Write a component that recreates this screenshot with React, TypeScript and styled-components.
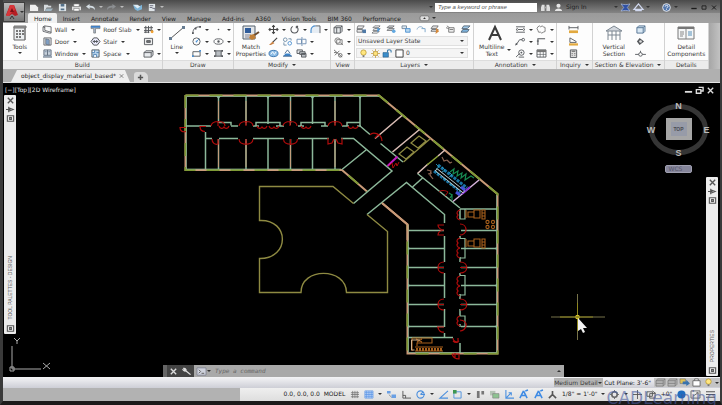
import React from "react";
import styled, { createGlobalStyle } from "styled-components";

const GlobalStyle = createGlobalStyle`
  *, *::before, *::after { box-sizing: border-box; }
  html, body, #root { margin: 0; height: 100%; }
  body { background: #000; overflow: hidden; }
  body, button, input, select {
    font-family: "DejaVu Sans", "Noto Sans", sans-serif;
    font-size: 6px;
    line-height: 8px;
    color: #3c3c3c;
  }
  button, input, select { border: 0; padding: 0; margin: 0; background: none; border-radius: 0; }
`;

/* ---------- shared pieces ---------- */

const INK = "#55585c";
const BLUE = "#4b8fd0";

const glyphs: Record<string, React.ReactNode> = {
  new: <path d="M1 2h6l3 3v4H1z" fill="#eee" />,
  open: <g fill="#d5dadd"><path d="M1 2h4l1 1h3v2H4L2 9H1z" /><path d="M4 6h7L9 9H2z" fill="#9fb4c0" /></g>,
  save: <g><path d="M2 1h8v8H2z" fill="#dfe6ea" /><path d="M4 1h4v3H4zM4 6h4v2H4z" fill="#54718a" /></g>,
  print: <g><path d="M1 4h10v4H1z" fill="#ddd" /><path d="M3 1h6v3H3zM3 6h6v3H3z" fill="#fff" stroke="#777" strokeWidth=".7" /></g>,
  undo: <path d="M1 4l4-3v2c4 0 6 1 6 5-1-2-3-3-6-3v2z" fill="#d4dde3" />,
  redo: <path d="M11 4L7 1v2C3 3 1 4 1 8c1-2 3-3 6-3v2z" fill="#8c8f92" />,
  project: <g><path d="M1 2l5 3 5-3v5L6 9 3 7z" fill="#7fb6da" /><path d="M1 2h5l3 2-3 2z" fill="#e0edf5" /></g>,
  sheet: <g><path d="M3 1h7v8H3z" fill="#dfe5e9" /><path d="M4 3h4M4 5h3M7 6h3v3" stroke="#667" fill="none" /></g>,
  binoc: <g fill="#ddd"><path d="M2 2h3v7H1V5zM7 2h3l1 3v4H7z" /><path d="M5 4h2v2H5z" fill="#aaa" /></g>,
  user: <g fill="#e6e6e6"><circle cx="6" cy="3" r="2.3" /><path d="M2 9c0-4 8-4 8 0z" /></g>,
  exchange: <path d="M1 1c3 1 7 1 10 0L8 5l3 4c-3-1-7-1-10 0l3-4z" fill="#2f51a5" stroke="#c6d2ef" strokeWidth=".6" />,
  cloud: <path d="M6 1L1 7h10zM3 7v1.500h6V7" fill="none" stroke="#d0d8ef" strokeWidth="1.400" />,
  help: <g><circle cx="6" cy="5" r="4.300" fill="#5478ae" stroke="#eee" /><path d="M4.600 4c0-2 3-2 3 0 0 1-1.500 1-1.500 2M6 7v.8" stroke="#fff" fill="none" /></g>,
  min: <path d="M2 6.500h8" stroke="currentColor" strokeWidth="2" />,
  max: <path d="M3 2.500h6v5H3z" fill="none" stroke="currentColor" strokeWidth="1.300" />,
  restore: <path d="M5 1.500h5v4H8M2.500 4h5v4h-5z" fill="none" stroke="currentColor" strokeWidth="1.500" />,
  close: <path d="M3 2l6 6M9 2L3 8" stroke="currentColor" strokeWidth="1.500" />,
  plus: <path d="M6 2v7M2.500 5.500h7" stroke="#555" strokeWidth="2" />,
  tabmenu: <g><rect x="1" y="2" width="10" height="5.500" rx="2" fill="#ddd" stroke="#666" strokeWidth=".8" /><path d="M4.500 5.500h3L6 3.500z" fill="#333" /></g>,

  wall: <path d="M1 2l2-1 7 1v7H8L1 7zM3 1v5l7 2M1 2l2 1" fill="#f4f6f8" stroke={INK} strokeWidth=".9" />,
  door: <g><path d="M2 1h8v8H2z" fill="#e4e8ec" stroke={INK} strokeWidth=".9" /><path d="M4 2l4 1v6L4 8z" fill="#7f9fc4" stroke={INK} strokeWidth=".6" /></g>,
  window: <g><path d="M2 1h8v6H2zM6 1v6M1 9h10" fill="#c8d2dd" stroke="#5e6b7c" /><path d="M3 3h2M7 3h2M1 8h10" stroke="#7c8ea5" /></g>,
  roof: <g><path d="M1 1h10v3H6v5H4V4H1z" fill="#aebccb" stroke={INK} strokeWidth=".6" /><path d="M1 1h10v2H1z" fill="#3f7fc5" /></g>,
  stair: <path d="M1 5l3-4h4l3 4-3 4H4zM3 5h6M4 3.500l4 3M4 6.500l4-3" fill="#eef" stroke={INK} strokeWidth="1.100" />,
  space: <g><path d="M2 1h8v8H2z" fill="#bcd9f2" stroke={INK} /><path d="M2 4h3V1M7 4h3M4 9V6h3v3" fill="#fff" stroke="#4d80b0" /></g>,
  column: <g><path d="M3 1v8M6 1v8M9 1v6M1 3h10M1 6h10M1 8h6" stroke={INK} strokeWidth="1.100" /><circle cx="10" cy="7.500" r="1.600" fill="#f0a030" /></g>,
  curtain: <g><path d="M1.500 1.500h9v7h-9z" fill="#eee" stroke={INK} /><path d="M4 4h4v2H4z" fill="#777" stroke={INK} /></g>,
  box: <path d="M1 4l2-2h8v5L9 9H1zM1 4h8v5M9 4l2-2" fill="#e8ebee" stroke={INK} />,

  arc: <g><path d="M2 9C2 4 5 2 10 2" fill="none" stroke={INK} /><path d="M1 8h2v2H1zM4 3h2v2H4zM9 1h2v2H9z" fill={INK} /></g>,
  circle: <g><circle cx="6" cy="5" r="4" fill="none" stroke={INK} /><path d="M6 5l3-3" stroke={BLUE} /><circle cx="6" cy="5" r="1" fill={BLUE} /></g>,
  rect: <g><path d="M2 3h8v5H2z" fill="none" stroke={INK} /><path d="M9 1h2v2H9zM1 7h2v2H1z" fill={BLUE} /></g>,
  point: <circle cx="6" cy="5" r=".9" fill={INK} />,
  ellipse: <g><ellipse cx="6" cy="5" rx="5" ry="3" fill="none" stroke={INK} /><circle cx="6" cy="5" r="1.300" fill={INK} /></g>,
  hatch: <g><path d="M3 2h6v6H3z" fill="#b9bec3" stroke={INK} /><path d="M1 1h2v2H1zM9 1h2v2H9zM1 7h2v2H1zM9 7h2v2H9z" fill={INK} /></g>,

  move: <path d="M6 0v10M1 5h10M4.500 2L6 .5 7.500 2M4.500 8L6 9.500 7.500 8M2.500 3.500L1 5l1.500 1.500M9.500 3.500L11 5 9.500 6.500" fill="none" stroke="#444" strokeWidth="1.200" />,
  rotate: <path d="M4 1.500a4 4 0 1 0 4 0M8 1.500h2M8 1.500v2" fill="none" stroke={INK} strokeWidth="1.200" />,
  fillet: <g><path d="M1 9V6c0-3 2-5 5-5h5v8z" fill="#e6edf4" /><path d="M1 9V6c0-3 2-5 5-5" fill="none" stroke={BLUE} strokeWidth="1.300" /><path d="M6 1h5v8" fill="none" stroke={INK} /></g>,
  erase: <g><path d="M10 1L5 6" stroke="#444" strokeWidth="1.300" /><path d="M5 5l2 2-4 2H1z" fill="#c98345" /></g>,
  copy: <g fill="none" stroke="#6f8ca6"><circle cx="3.500" cy="3" r="2" /><circle cx="8.500" cy="7" r="2" stroke={BLUE} /><path d="M7 2h3v2M2 6v3h3" /></g>,
  trim: <path d="M1 2.500h5v5H1zM7 2.500h4v5H7M6.500 0v10" fill="none" stroke="#6b8bb0" />,
  union: <g><ellipse cx="6" cy="5" rx="5" ry="3.500" fill="#8bbce6" stroke="#3672ad" /><path d="M3 6l2-3 2 3 2-3" fill="none" stroke="#fff" /></g>,
  mirror: <g><path d="M1 8h10L8 5H4z" fill="#3b83c9" /><path d="M3 5l3-4 3 4M1 8h10" fill="none" stroke="#4a6a8c" /></g>,
  array: <g><path d="M1 1h6v4H1z" fill="#dfe2e6" stroke={INK} /><path d="M4 3h6v3H4zM6 5h5v4H6z" fill="#bcc1c6" stroke={INK} /></g>,

  view1: <path d="M1 3l2-2h7v6l-2 2H1zM1 3h7v6M8 3l2-2M4 3v6" fill="#e6e9ec" stroke={INK} />,
  view2: <g fill="none" stroke="#777"><circle cx="5" cy="4" r="3" /><path d="M4 3h6v5H4zM8 6l3 3" /></g>,
  view3: <g fill="none" stroke="#666"><path d="M1 1l9 8M2 7l5-5" /><circle cx="8" cy="7" r="2" /><path d="M1 4h3" /></g>,

  layer1: <g><path d="M2 1h7L7 4H1zM1 5h6v3H1z" fill="#e8e8e8" stroke={INK} strokeWidth=".8" /><path d="M7 5h4v4H7z" fill="#4f79a6" /></g>,
  layer2: <g><path d="M4 1h6L8 3H2zM4 4h6L8 6H2zM3 7h6L7 9H1z" fill="#fff" stroke={INK} strokeWidth=".8" /><path d="M7 3l3 2-3 3z" fill="#4b9be0" /></g>,
  layer3: <g><path d="M3 1h6L7 3H1zM3 4h6L7 6H1z" fill="#ddd" stroke={INK} strokeWidth=".8" /><circle cx="8.500" cy="7" r="2" fill="#62a8e0" /></g>,
  layer4: <g><path d="M1 1h5v3H1z" fill="#d8e8f5" stroke="#789" /><path d="M5 4h5v4H5z" fill="#b9d8ef" stroke="#4b8fd0" /></g>,
  layer5: <g><path d="M1 5c1-4 6-4 7-1" fill="none" stroke="#88aaca" /><path d="M6 4h4v4" fill="none" stroke="#78a4c8" /></g>,
  layer6: <g><path d="M3 1h6L7 4H1zM2 5h7L7 7H1z" fill="#ddd" stroke={INK} strokeWidth=".8" /><path d="M7 3l3 4-4 3z" fill="#d68a3c" /></g>,
  layer7: <path d="M2 1l3 2M4 3h6v5H4zM5 5h4M1 3l3 1" fill="#eee" stroke="#777" />,
  layer8: <g><path d="M4 1h7L8 4H2z" fill="#9fc8e8" stroke="#567" /><path d="M3 5h7L8 8H1z" fill="#7db3dd" stroke="#567" /></g>,
  bulb: <g><circle cx="6" cy="4" r="3" fill="#ffe680" stroke="#b79423" strokeWidth=".8" /><path d="M5 7h2v2H5z" fill="#777" /></g>,
  sun: <g><path d="M6 0v10M1 5h10M2.500 1.500l7 7M9.500 1.500l-7 7" stroke="#c49a3a" strokeWidth=".8" /><circle cx="6" cy="5" r="2.500" fill="#ffe37a" stroke="#a8852d" strokeWidth=".7" /></g>,
  unlock: <g><path d="M1 4h6v5H1z" fill="#3c8ecb" stroke="#28608c" strokeWidth=".7" /><path d="M6 4V2c0-1.500 4-1.500 4 0v2" fill="none" stroke="#3c7cab" strokeWidth="1.200" /></g>,
  swatch: <path d="M2 1h8v8H2z" fill="#fff" stroke="#333" />,

  dim: <path d="M1 2h10M1 8h10M3 5h6M3 3.500L1 5l2 1.500M9 3.500L11 5 9 6.500" fill="none" stroke={INK} />,
  leader: <g><path d="M1 9l4-6h3" fill="none" stroke={INK} /><circle cx="9" cy="3" r="1.500" fill="none" stroke={INK} /><path d="M0 9.500l1-3 2 1.500z" fill={INK} /></g>,
  tag: <g fill="none" stroke={INK}><path d="M1 9l4-4" /><circle cx="7" cy="4" r="3" /><path d="M6 4h2M7 3v2M4 9h6" /></g>,
  revcloud: <path d="M2 2q2-2 3 0 2-2 3 0 3 0 2 3 1 3-2 3-2 2-3 0-3 1-3-2-2-2 0-4z" fill="none" stroke="#777" />,
  elbow: <path d="M2 9V2h8M2 5l-1-1M2 5l1-1" fill="none" stroke={INK} strokeWidth="1.200" />,
  table: <g><path d="M1 1h10v8H1z" fill="#fff" stroke={INK} /><path d="M1 1h10v2.500H1z" fill="#777" /><path d="M1 6h10M4.500 3v6M8 3v6" stroke={INK} strokeWidth=".7" /></g>,
  measure: <g><path d="M1 1v4M11 1v4M1 3h10" stroke={INK} /><path d="M1 6h10v3H1z" fill="#e2a93f" /></g>,
  area: <g><path d="M2 1l7 4v1H2z" fill="#fff" stroke={INK} /><path d="M1 7h10v2.500H1z" fill="#e2a93f" /></g>,
  calc: <g><path d="M2.500 1h7v8.500h-7z" fill="#ddd" stroke={INK} /><path d="M4 2.500h4M4 5h1M7 5h1M4 7h1M7 7h1" stroke="#555" /></g>,
  cube: <path d="M2 3l2-2h7v6L9 9H2zM2 3h7v6M9 3l2-2" fill="#d9e8f4" stroke="#4f6f8e" />,
  mark: <g><path d="M2 5l3-4 5 4-5 4z" fill={INK} /><circle cx="6" cy="5" r="1.500" fill="#ddd" /></g>,
  level: <g fill="none" stroke={INK}><path d="M0 6h12" /><circle cx="6" cy="6" r="2" fill="#fff" /><path d="M6 4V2" /></g>,

  grid: <path d="M4 1v8M6.500 1v8M9 1v8M2 3h9M2 5h9M2 7.500h9" stroke="#6c6c6c" strokeWidth=".8" />,
  dots: <path d="M2 1h9v8H2zM2 3h9M2 5h9M2 7h9M4 1v8M6.500 1v8M9 1v8" fill="#c9defa" stroke="#5a94e4" strokeWidth=".8" />,
  infer: <g><path d="M1 1h4v3H1zM6 5h5v4H6z" fill="#6aa0e4" /><path d="M3 5l3 3" stroke="#888" /></g>,
  ortho: <path d="M2 1v8h9M2 6h3v3" fill="none" stroke="#555" />,
  polar: <g fill="none" stroke="#4a8edd" strokeWidth="1.200"><circle cx="6" cy="5" r="4" /><path d="M6 5h5M6 5l3-3" /></g>,
  angle: <path d="M11 1L2 9h9" fill="none" stroke="#4a8edd" strokeWidth="1.200" />,
  snap: <g><path d="M2 2h8v7H2z" fill="none" stroke="#4a8edd" /><path d="M1 0h4v4H1z" fill="#3e9750" /></g>,
  lwt: <g fill="#777"><path d="M2 1h3v8H2zM7 1h3v4H7z" /></g>,
  cycle: <g><path d="M1 1h6v5H1z" fill="#b6c4b6" /><path d="M4 4h7v5H4z" fill="#8ec391" stroke="#777" strokeWidth=".6" /></g>,
  ucs: <path d="M2 0v9h9M2 9l6-6M5 3h3v3" fill="none" stroke="#4a90e0" strokeWidth="1.200" />,
  annoA: <path d="M6 1L2 9M6 1l4 8M4 6h5M8 1l3-1" fill="none" stroke="#3d8ae4" strokeWidth="1.700" />,
  annoB: <path d="M6 1v4L2 9M6 5l4 4M6 3v3" fill="none" stroke="#555" strokeWidth="1.800" />,
  gear: <g><circle cx="6" cy="5" r="3" fill="none" stroke="#666" strokeWidth="1.800" /><path d="M6 0v2M6 8v2M1 5h2M9 5h2" stroke="#666" /></g>,
  cross: <path d="M6 0v10M1 5h10" stroke="#555" />,
  isolate: <path d="M1 2h6v5H1zM4 4h6v5H4zM7 1l4 3" fill="none" stroke="#555" />,
  perf: <circle cx="6" cy="5" r="4.500" fill="#1f6dc0" />,
  full: <path d="M1 1h10v8H1zM3 7l6-4M7 3h2v2" fill="none" stroke="#666" />,
  menu: <path d="M1 2h10M1 5h10M1 8h10" stroke="#555" strokeWidth="1.200" />,
  surf: <path d="M1 3l2-2h8v6L9 9H1zM1 3h8v6M9 3l2-2M1 6h8" fill="#b6b6b6" stroke="#777" strokeWidth=".8" />,
  swap: <g><path d="M1 1h6v5H1z" fill="#e1c255" stroke="#666" strokeWidth=".6" /><path d="M4 4h4V2l4 4-4 3V7H4z" fill="#3973ad" /></g>,
  clip: <path d="M2 3h8v6H2zM4 3V1h4v2" fill="#fff" stroke="#666" />,
  pin: <path d="M1 5h5M4 2v6M4 3l5 2-5 2" fill="none" stroke="currentColor" strokeWidth="1.200" />,
  props: <path d="M2.500 2h7v6h-7zM5 4h2v2H5z" fill="none" stroke="currentColor" strokeWidth="1.200" />,
  wrench: <path d="M2 1c3-1 5 2 4 3l5 4-1 1-5-4C3 6 1 3 1 2l2 1z" fill="#ddd" />,
  prompt: <g><path d="M1 1h10v8H1z" fill="#cfd2dc" stroke="#77798a" strokeWidth=".8" /><path d="M3 3l2 2-2 2M6 7h3" fill="none" stroke="#555" /></g>,
};

const Svg = styled.svg<{ $w?: number; $h?: number }>`
  display: block;
  flex: none;
  width: ${(p) => p.$w ?? 11}px;
  height: ${(p) => p.$h ?? 9}px;
  overflow: visible;
`;

const Glyph = ({ name, w, h }: { name: string; w?: number; h?: number }) => (
  <Svg viewBox="0 0 12 10" $w={w} $h={h} aria-hidden="true">{glyphs[name]}</Svg>
);

const Caret = styled.span<{ $light?: boolean; $up?: boolean }>`
  flex: none;
  width: 0;
  height: 0;
  border: 2px solid transparent;
  border-${(p) => (p.$up ? "bottom" : "top")}: 2px solid ${(p) => (p.$light ? "#bbb" : "#333")};
  border-${(p) => (p.$up ? "top" : "bottom")}: 0;
`;

const IconButton = styled.button`
  display: flex;
  align-items: center;
  gap: 2px;
  white-space: nowrap;
  flex: none;
  color: inherit;
`;

const Tool = ({ name, label }: { name: string; label?: string }) => (
  <IconButton type="button" aria-label={label ?? name}><Glyph name={name} /></IconButton>
);

/* ---------- window frame ---------- */

const Frame = styled.main`
  display: flex;
  flex-direction: column;
  height: 100vh;
  border: solid #3a3a3a;
  border-width: 0 2px 4px 3px;
  border-bottom-color: #1c1a1a;
  background: #b0b0b0;
`;

const Header = styled.header`
  display: grid;
  grid-template-columns: 23px minmax(0, 1fr);
  grid-template-rows: 13px 10px;
  background: linear-gradient(#4a4a4a, #858585 13px, #9a9a9a 13px, #a2a2a2);
`;

const AppButton = styled.button`
  grid-row: 1 / 3;
  display: flex;
  align-items: center;
  justify-content: center;
  gap: 1px;
  margin: 2px 1px 1px 0;
  background: linear-gradient(#b9b9b9, #777);
  border: 1px solid #3f3f3f;
`;

const TitleBar = styled.div`
  display: flex;
  align-items: center;
  padding: 1px 2px 0 3px;
  min-width: 0;
`;

const QuickTools = styled.div`
  display: flex;
  align-items: center;
  gap: 3px;
  flex: 1;
`;

const QuickGroup = styled.div`
  display: flex;
  align-items: center;
  gap: 3px;
  margin-left: 5px;
`;

const Search = styled.input`
  flex: 0 1 102px;
  min-width: 0;
  height: 9px;
  margin: 0 3px 0 2px;
  padding: 0 3px;
  background: #fff;
  font: italic 6px/9px "Liberation Sans", Arial, sans-serif;
  &::placeholder { color: #555; opacity: 1; }
`;

const Account = styled.div`
  display: flex;
  align-items: center;
  gap: 2px;
  flex: 0 0 178px;
  color: #1c1c1c;
`;

const Spacer = styled.span<{ $grow?: number }>`
  flex: ${(p) => p.$grow ?? 1} 1 0;
`;

const Tabs = styled.nav`
  display: flex;
  align-items: stretch;
  padding-left: 2px;
`;

const Tab = styled.button<{ $on?: boolean }>`
  padding: 0 5px 0 6px;
  height: 10px;
  line-height: 9px;
  color: #202020;
  ${(p) => p.$on && "background: #f1f1f1; border-radius: 2px 2px 0 0;"}
`;

const TabExtras = styled.div`
  display: flex;
  align-items: center;
  gap: 2px;
  padding-left: 13px;
`;

/* ---------- ribbon ---------- */

const Ribbon = styled.section`
  display: flex;
  height: 46px;
  padding-right: 11px;
  background: linear-gradient(90deg, #eee calc(100% - 11px), #a6a6a6 calc(100% - 11px), #c2c2c2);
`;

const PanelBox = styled.section<{ $w: number }>`
  flex: ${(p) => p.$w} 1 0;
  min-width: 0;
  display: flex;
  flex-direction: column;
  border-right: 1px solid #d2d2d2;
  background: #fdfdfd;
`;

const PanelBody = styled.div<{ $cols: number[] }>`
  flex: 1;
  display: grid;
  grid-template-columns: ${(p) => p.$cols.map((c) => `minmax(0, ${c}fr)`).join(" ")};
`;

const PanelTitle = styled.h2`
  display: flex;
  align-items: center;
  justify-content: center;
  gap: 4px;
  margin: 0;
  height: 9px;
  font-size: 6px;
  font-weight: 400;
  line-height: 8px;
  white-space: nowrap;
  background: #ececec;
  border-top: 1px solid #ddd;
`;

const Column = styled.div<{ $pad?: number; $rule?: boolean }>`
  display: grid;
  grid-template-rows: repeat(3, 11px);
  row-gap: 1px;
  padding: 1px 0 0 ${(p) => p.$pad ?? 0}px;
  ${(p) => p.$rule && "border-left: 1px solid #ccc;"}
`;

const Row = styled.div<{ $gap?: number; $spread?: boolean }>`
  display: flex;
  align-items: center;
  gap: ${(p) => p.$gap ?? 3}px;
  ${(p) => p.$spread && "justify-content: space-between; padding-right: 2px;"}
`;

const BigButton = styled.button`
  display: flex;
  flex-direction: column;
  align-items: center;
  justify-content: flex-start;
  padding-top: 2px;
  gap: 2px;
  line-height: 7px;
  white-space: nowrap;
`;

const BigLabel = styled.span`
  display: flex;
  align-items: center;
  gap: 2px;
`;

const DropRow = styled.div`
  display: flex;
  align-items: center;
  gap: 1px;
  height: 10px;
  margin-right: 5px;
  padding: 0 3px 0 1px;
  background: #f4f4f4;
  border: 1px solid #e0e0e0;
`;

const DropSelect = styled.select`
  flex: 1;
  min-width: 0;
  appearance: none;
  height: 8px;
  outline: none;
`;

const Panel = ({ title, w, cols, more, children }: { title: string; w: number; cols: number[]; more?: boolean; children: React.ReactNode }) => (
  <PanelBox $w={w}>
    <PanelBody $cols={cols}>{children}</PanelBody>
    <PanelTitle>{title}{more && <Caret />}</PanelTitle>
  </PanelBox>
);

const Labelled = ({ name, text }: { name: string; text: string }) => (
  <Row $gap={4}><IconButton type="button"><Glyph name={name} />{text}</IconButton><Caret /></Row>
);

const IconColumn = ({ names, pad, caret = true }: { names: string[]; pad?: number; caret?: boolean }) => (
  <Column $pad={pad}>
    {names.map((n) => <Row key={n}><Tool name={n} />{caret && <Caret />}</Row>)}
  </Column>
);

const RibbonPanels = () => (
  <Ribbon>
    <Panel title="Build" w={161} cols={[34, 54, 52, 20]}>
      <BigButton type="button">
        <Svg viewBox="0 0 14 16" $w={14} $h={16}>
          <path d="M1 2h11v13H1z" fill="#eceff1" stroke="#666" />
          <path d="M3 5h2v2H3zM6 5h2v2H6zM9 5h2v2H9zM3 8h2v2H3zM6 8h2v2H6zM9 8h2v2H9zM3 11h2v2H3zM6 11h2v2H6z" fill="#777" />
          <path d="M1 1h12v2H1zM12 3v12" stroke="#777" fill="#999" />
        </Svg>
        Tools<Caret />
      </BigButton>
      <Column $pad={4} $rule>
        <Labelled name="wall" text="Wall" /><Labelled name="door" text="Door" /><Labelled name="window" text="Window" />
      </Column>
      <Column>
        <Labelled name="roof" text="Roof Slab" /><Labelled name="stair" text="Stair" /><Labelled name="space" text="Space" />
      </Column>
      <Column $pad={1}>
        <Row><Tool name="column" /><Caret /></Row><Row><Tool name="curtain" /></Row><Row><Tool name="box" /><Caret /></Row>
      </Column>
    </Panel>
    <Panel title="Draw" w={71} cols={[28, 22, 20]}>
      <BigButton type="button">
        <Svg viewBox="0 0 18 16" $w={18} $h={16}>
          <path d="M2 14L16 2" stroke="#555" />
          <path d="M1 12h3v3H1zM14 1h3v3h-3z" fill="#667c92" />
        </Svg>
        Line<Caret />
      </BigButton>
      <IconColumn names={["arc", "circle", "rect"]} />
      <IconColumn names={["point", "ellipse", "hatch"]} />
    </Panel>
    <Panel title="Modify" w={98} cols={[35, 63]} more>
      <BigButton type="button">
        <Svg viewBox="0 0 18 16" $w={18} $h={16}>
          <path d="M1 1h12v13H1z" fill="#e2e6ea" stroke="#55606c" />
          <path d="M3 3h6v5H3z" fill="#2f5c9b" /><path d="M3 10h6M3 12h4" stroke="#889" />
          <path d="M17 7l-6 4" stroke="#6a4a2d" strokeWidth="2" /><path d="M8 10l4-1 2 4-4 2-3-2z" fill="#c08038" />
        </Svg>
        <span>Match<br />Properties</span>
      </BigButton>
      <Column>
        <Row><Tool name="move" /><Caret /><Tool name="rotate" /><Caret /><Tool name="fillet" /><Caret /></Row>
        <Row><Tool name="erase" /><Tool name="copy" /><Tool name="trim" /><Caret /></Row>
        <Row><Tool name="union" /><Tool name="mirror" /><Tool name="array" /><Caret /></Row>
      </Column>
    </Panel>
    <Panel title="View" w={23} cols={[1]}>
      <IconColumn names={["view1", "view2", "view3"]} pad={2} />
    </Panel>
    <Panel title="Layers" w={120} cols={[1]} more>
      <Column $pad={1}>
        <Row $spread>{[1, 2, 3, 4, 5, 6, 7, 8].map((n) => <Tool key={n} name={`layer${n}`} />)}</Row>
        <DropRow>
          <DropSelect aria-label="Layer state"><option>Unsaved Layer State</option></DropSelect><Caret />
        </DropRow>
        <DropRow>
          <Glyph name="bulb" /><Glyph name="sun" /><Glyph name="unlock" /><Glyph name="swatch" />
          <DropSelect aria-label="Current layer"><option>0</option></DropSelect><Caret />
        </DropRow>
      </Column>
    </Panel>
    <Panel title="Annotation" w={83} cols={[41, 21, 20]} more>
      <BigButton type="button">
        <Svg viewBox="0 0 16 16" $w={16} $h={16}>
          <path d="M2 15L8 2l6 13M4 10h8" fill="none" stroke="#3c3c3c" strokeWidth="2" />
        </Svg>
        <BigLabel><span>Multiline<br />Text</span><Caret /></BigLabel>
      </BigButton>
      <IconColumn names={["dim", "leader", "tag"]} />
      <IconColumn names={["revcloud", "elbow", "table"]} />
    </Panel>
    <Panel title="Inquiry" w={35} cols={[1]} more>
      <IconColumn names={["measure", "area", "calc"]} pad={11} caret={false} />
    </Panel>
    <Panel title="Section & Elevation" w={72} cols={[43, 29]} more>
      <BigButton type="button">
        <Svg viewBox="0 0 18 16" $w={18} $h={16}>
          <path d="M1 6l8-5 8 5zM3 6v9M15 6v9M3 10h12M7 6v9M11 6v9" fill="#d3d8de" stroke="#7c8792" />
        </Svg>
        <span>Vertical<br />Section</span>
      </BigButton>
      <IconColumn names={["cube", "mark", "level"]} caret={false} />
    </Panel>
    <Panel title="Details" w={44} cols={[1]}>
      <BigButton type="button">
        <Svg viewBox="0 0 18 16" $w={18} $h={16}>
          <path d="M1 2h16v12H1z" fill="#f5f7f8" stroke="#777" /><path d="M1 2h16v2H1z" fill="#777" />
          <path d="M9 4v10M3 7h4M3 9h4M3 11h3" stroke="#888" /><path d="M11 6h4v5h-4z" fill="#a5c3d8" />
        </Svg>
        <span>Detail<br />Components</span>
      </BigButton>
    </Panel>
  </Ribbon>
);

/* ---------- document tabs ---------- */

const DocBar = styled.nav`
  display: flex;
  align-items: flex-end;
  gap: 4px;
  height: 14px;
  padding-left: 8px;
  border-bottom: 1px solid #e4e4e4;
  background: #b0b0b0;
`;

const DocTab = styled.div`
  display: flex;
  align-items: center;
  gap: 2px;
  height: 12px;
  padding: 0 5px 0 10px;
  background: #eee;
  color: #777;
  clip-path: polygon(0 100%, 6px 0, calc(100% - 5px) 0, 100% 100%);
`;

const DocName = styled.button`
  color: #1c1c1c;
`;

const AddTab = styled.button`
  display: flex;
  align-items: center;
  justify-content: center;
  width: 14px;
  height: 10px;
  background: #dadada;
  border-radius: 3px 5px 0 0;
`;

/* ---------- drawing area ---------- */

const Canvas = styled.section`
  position: relative;
  flex: 1;
  min-height: 0;
  background: #000;
  color: #ddd;
`;

const Plan = styled.svg`
  display: block;
  width: 100%;
  height: 100%;
`;

const ViewLabel = styled.p`
  position: absolute;
  top: 3px;
  left: 2px;
  margin: 0;
  color: #e4e4e4;
`;

const ViewControls = styled.div`
  position: absolute;
  top: 3px;
  right: 4px;
  display: flex;
  color: #ddd;
`;

const Palette = styled.aside<{ $side: "left" | "right" }>`
  position: absolute;
  ${(p) => (p.$side === "left" ? "left: 1px; top: 12px; bottom: 43px;" : "right: 2px; top: 94px; bottom: 1px;")}
  width: 12px;
  display: flex;
  flex-direction: column;
  align-items: center;
  padding: 1px 0;
  background: #ececec;
  color: #555;
  border-radius: 1px;
`;

const PaletteName = styled.span`
  margin: auto 0 4px;
  writing-mode: vertical-rl;
  transform: rotate(180deg);
  font: 5px/8px "Liberation Sans", Arial, sans-serif;
  white-space: nowrap;
`;

const Cube = styled.div`
  position: absolute;
  right: 9px;
  top: 16px;
  width: 66px;
  display: flex;
  flex-direction: column;
  align-items: center;
  gap: 6px;
`;

const Wcs = styled.button`
  width: 27px;
  height: 8px;
  padding-left: 3px;
  text-align: left;
  background: #85859a;
  border: 1px solid #a0a0b0;
  border-radius: 2px;
  line-height: 6px;
  color: #55556a;
`;

const CommandBar = styled.form`
  position: absolute;
  left: 160px;
  right: 156px;
  bottom: 0;
  height: 12px;
  display: flex;
  align-items: center;
  background: #a9a9a9;
  padding-right: 3px;
`;

const CommandGrip = styled.div`
  display: flex;
  align-items: center;
  justify-content: flex-end;
  gap: 2px;
  width: 31px;
  height: 100%;
  margin-right: 2px;
  padding-right: 2px;
  color: #ddd;
  background: #444;
  border-left: 4px solid #666;
`;

const CommandInput = styled.input`
  flex: 1;
  min-width: 0;
  margin-left: 4px;
  outline: none;
  font: italic 6px/8px "DejaVu Sans Mono", monospace;
  &::placeholder { color: #666; opacity: 1; }
`;

const GREEN = "#8cb89a";
const SALMON = "#c99a78";
const LIME = "#7f9a36";
const RED = "#b00c0c";
const OLIVE = "#8e8a42";
const PINK = "#d9bcb4";
const ORANGE = "#a8601c";

const topDoors = [218, 246, 290, 335];
const rightRows = [230, 248, 267, 285, 304, 326];

const FloorPlan = () => (
  <Plan viewBox="3 83 717 294" fill="none" role="img" aria-label="Floor plan">
    {/* outer shell with alternating material bands */}
    <g strokeWidth="2">
      <path d="M185.500 95.500H379L497.500 194V353.500H407.500V224.500L382 203M185.500 95v75H342L367 191.500" stroke={SALMON} />
      <path d="M185.500 95.500H379L497.500 194V353.500H407.500V224.500M185.500 95v75H342L367 191.500" stroke={LIME} strokeDasharray="13 11" />
    </g>
    <path d="M186.500 96.500H379M408.500 225V352.500H496.500V195M186.500 97v72H341" stroke={GREEN} strokeWidth=".7" />

    {/* west wing partitions */}
    <g stroke={GREEN} strokeWidth="1.500">
      <path d="M218.500 96v27M246 96v27M268 96v28M290.500 96v27M312.500 96v28M335 96v27M360 96v30L370 134.500" />
      <path d="M205.500 132v37M218.500 139v30M246 139v30M268 139v30M290.500 139v30M312.500 139v30M335 139v30" />
      <path d="M186 126h25M231 126h7M253 126h6M276 126h8M298 126h6M321 126h7M342 126h7M357 126h4" />
      <path d="M219 122.500h12v3M256 126v-3.500h24v3.500M301 126v-3.500h24v3.500M347 126v-3.500h13" />
      <path d="M205 138.500h7M219 138.500h19M253 138.500h31M298 138.500h31M341 138.500h12.500L392 171 353.500 203.500M366 150L342 169.500" />
    </g>
    <path d="M218.500 101v18M246 101v24M290.500 101v24M335 101v24M246 141v26M290.500 141v26M335 141v26M218.500 141v26" stroke={SALMON} strokeWidth=".9" />
    <path d="M216 96h5l-2.500 3zM266 96h4l-2 3zM310 96h5l-2.500 3zM358 96h4l-2 3z" fill={GREEN} />

    {/* corner core */}
    <path d="M402 115.500L375 138.500M419.500 129.500L392.500 152" stroke={PINK} strokeWidth="1.600" />
    <path d="M380.500 143.500L403 162M417.500 173.500L460 208M422.500 178L412.500 187" stroke={GREEN} strokeWidth="1.500" />
    <path d="M430.500 138.500L403.500 162M399 154l8-7 7 5-8 7zM411 143l8-7 7 5-8 7z" stroke={OLIVE} strokeWidth="1.300" />
    <path d="M445 150l-7 6M428 164l-10.500 9.500" stroke={PINK} strokeWidth="1.600" />
    <path d="M438 156l-11 9" stroke="#8fa53a" strokeWidth="1.600" />
    <path d="M397.500 156.500L387.500 166" stroke="#c21ac2" strokeWidth="2" />
    <path d="M389 166l3-3 1 5 3-5 1 3 2-4M439 192c2-2 6-2 9 0l-3 4" stroke={RED} />
    <path d="M479 180L453 201.500" stroke="#d7b4dc" strokeWidth="1.500" />
    <path d="M470 187l-8 7" stroke="#8534d0" strokeWidth="2" />
    <g stroke="#1874a4" strokeWidth="3" strokeDasharray="3 1">
      <path d="M438 165l29 23M434 171l27 21" />
    </g>
    <g stroke="#2aa3c8" strokeWidth=".8">
      <path d="M436 164l3 3-3 2M442 167l3 3-3 2M449 172l3 3-3 2M436 172l3 2M443 178l3 2M450 184l3 2" />
    </g>
    <path d="M436 169.500l28 22.500" stroke="#d5e6e8" strokeWidth="3.400" />
    <path d="M436.500 170l27 21.500" stroke="#000" strokeWidth="1.800" />
    <path d="M450 172l4-3-1 5 5-3-1 5 5-3-1 5 5-4-1 6 6-4 3 2M449 193l3 2-2 3M452 194v6" stroke="#178a52" strokeWidth="1.200" />
    <path d="M427 170l4 1-1 4 3 4M442 157l2 4 3-1M447 160l3 3 2-1M428 174l4-1" stroke="#8a6350" strokeWidth="1.200" />
    <path d="M456 192l4 3M461 187l4 3" stroke="#4555d8" strokeWidth="3" />

    {/* south wing */}
    <g stroke={GREEN} strokeWidth="1.500">
      <path d="M367 214.500L406.500 182.500 444.500 214.500V223M444.500 236v26M444.500 273v25M444.500 309v18M444.500 333v4" />
      <path d="M460 209h37M460 209v10M460 236v3M460 257v5M460 273v3M460 294v5M460 309v7M460 324v3M460 343v10" />
      {rightRows.map((y) => <path key={y} d={`M408 ${y}.500H444M461 ${y}.500H497`} />)}
      <path d="M408 337.500h45" />
      <path d="M465 209v10h-5M460 238.500h5V258h-5M460 275.500h5V295h-5M460 316h5v10" strokeWidth="1.200" />
    </g>
    <path d="M382 203l25.500 21.500V240" stroke={SALMON} strokeWidth="2" />
    {[248, 285, 326].map((y) => <path key={y} d={`M408 ${y - 1}l3 1.500-3 1.500zM497 ${y - 1}l-3 1.500 3 1.500z`} fill={GREEN} />)}

    {/* doors */}
    <g stroke={RED} strokeWidth="1.200">
      {topDoors.map((x) => <path key={x} d={`M${x - 7} 126c1-6 14-6 14 0M${x} 121v5`} />)}
      <path d="M239 139c0 7 14 7 14 0M246 139v6M283.500 139c0 7 14 7 14 0M290.500 139v6M328 138v6l4-1 2-4M342 138v6l-4-1-2-4M212 139c0 4 3 6 6 5v-5" />
      {[224, 262, 274, 306, 353].map((x) => <path key={x} d={`M${x - 5} 126c1 3 4 3 5 1 1 2 4 2 5-1`} />)}
      <path d="M186 127.500h-6c0 3 2 5 6 4M206 126.500h-6c0 3 2 5 5 5" />
      <path d="M370 135c3-4 12-1 12 6M375 138l3-3" />
      <path d="M444 225h-6c0 3 3 5 6 5-3 0-6 2-6 5h6M460 224c4 0 6 3 6 6s-3 5-6 5" />
      {[267, 304].map((y) => <path key={y} d={`M444 ${y - 5}c-8 0-8 11 0 11M438 ${y}.500h6M460 ${y - 5}c9 0 9 11 0 11M460 ${y}.500h6`} />)}
      <path d="M437 327h7M438 327c0 3 3 6 6 5M460 320c4 0 7 3 6 6s-3 5-6 5M453 338c0 3 3 5 6 3M453 341c1 1 3 2 5 1v-4" />
      {[215, 243, 253, 281, 291, 321].map((y) => <path key={y} d={`M460 ${y - 5}c-3 1-4 3-2 5-2 2-1 4 2 5`} />)}
      <path d="M452 354h7v5c-4 0-6-2-7-5M455 353v5" />
    </g>

    {/* furniture and stairs */}
    <g stroke={ORANGE} strokeWidth="1.100">
      {[210, 239].map((y) => <path key={y} d={`M466 ${y}v8M468 ${y + 2}h6v5h-6zM474 ${y}h6v8h-6zM482 ${y}h3v9h-3zM482 ${y + 3}h3M482 ${y + 6}h3`} />)}
      <circle cx="487.500" cy="222" r="1.600" /><circle cx="493" cy="222" r="1.600" />
      <circle cx="487.500" cy="227" r="1.600" /><circle cx="493" cy="227" r="1.600" />
      <path d="M415 347h28M415 351h28M412 338h20v5h-15v3M412 338v13M416 339l6 3M422 339l-5 3" />
      <path d="M417 348v3M420 348v3M423 348v3M426 348v3M429 348v3M432 348v3M435 348v3M438 348v3M441 348v3" strokeWidth="2" />
    </g>
    <path d="M420 340h-8.500v10h3" stroke="#d2b18d" />

    {/* courtyard outline */}
    <path d="M353.500 203.500L333 186.500H259.500V220.500C290 219 290 259 259.500 258.500V292.500H301C301 267 346 267 346.500 292.500H387.500V231.500L367 214.500" stroke={OLIVE} strokeWidth="1.400" />

    {/* coordinate axes */}
    <path d="M12 346v23h29M10 367h4v4h-4zM14 338l3 3 3-3M17 341v3M43 363l7 6M50 363l-7 6" stroke="#aaa" />

    {/* crosshair and pointer */}
    <path d="M551 317h54M577.500 294v46" stroke="#77734a" />
    <path d="M560 317h33M577.500 303v28" stroke="#8f871e" />
    <path d="M576 315.500h3v3h-3z" stroke="#d0bd28" />
    <path d="M578 318v13l3-2 2 4 2-1-2-4h4z" fill="#f2f2f2" />
  </Plan>
);

const ViewCube = () => (
  <Cube>
    <Svg viewBox="644 98 66 60" $w={66} $h={60} fill="none">
      <ellipse cx="677.500" cy="128.500" rx="27" ry="23" stroke="#353535" strokeWidth="5" />
      <path d="M665 117h26v22h-26z" fill="#a6a6a6" /><path d="M670 121h16v14h-16z" fill="#979ba8" />
      <g fill="#bbb" fontFamily="Liberation Sans, sans-serif" fontSize="9" fontWeight="700" textAnchor="middle">
        <text x="677.500" y="108">N</text><text x="677.500" y="155">S</text>
        <text x="650" y="132">W</text><text x="705.500" y="132">E</text>
        <text x="677.500" y="130" fontSize="5" fill="#4a4a50">TOP</text>
      </g>
    </Svg>
    <Wcs type="button">WCS</Wcs>
  </Cube>
);

/* ---------- bottom bars ---------- */

const DetailBar = styled.div`
  display: flex;
  align-items: center;
  justify-content: flex-end;
  gap: 1px;
  height: 11px;
  background: linear-gradient(#f4f4f6, #cdced6);
  white-space: nowrap;
  color: #222;
`;

const DetailPick = styled.label`
  display: flex;
  align-items: center;
  width: 49px;
  height: 9px;
  padding-right: 1px;
  background: #b4b4b4;
`;

const DetailIcons = styled.div`
  display: flex;
  align-items: center;
  gap: 1px;
  height: 9px;
  padding: 0 1px;
  margin-left: 2px;
  background: #c4c4c4;
`;

const StatusBar = styled.footer`
  position: relative;
  display: flex;
  height: 13px;
  background: #b2b2b2;
`;

const StatusItems = styled.div`
  display: flex;
  align-items: center;
  justify-content: space-between;
  flex: 1;
  margin-left: 33%;
  padding: 0 4px 1px 44px;
  background: linear-gradient(#efefef, #dedede);
  white-space: nowrap;
  color: #222;
`;

const Watermark = styled.span`
  position: absolute;
  right: 3px;
  top: 4px;
  font-size: 17px;
  line-height: 12px;
  color: rgba(72, 92, 160, 0.6);
  pointer-events: none;
`;

const StatusGroup = styled.span`
  display: flex;
  align-items: center;
  gap: 4px;
`;

const tabNames = ["Home", "Insert", "Annotate", "Render", "View", "Manage", "Add-ins", "A360", "Vision Tools", "BIM 360", "Performance"];

export default function App() {
  return (
    <>
      <GlobalStyle />
      <Frame>
        <Header>
          <AppButton type="button" aria-label="Application menu">
            <Svg viewBox="0 0 14 16" $w={14} $h={16}>
              <path d="M1 11L5 1h4l4 10-3 1-3-2-3 2z" fill="#b51f24" />
              <path d="M5 1h4l1 5-3 2-3 4H1z" fill="#d8363a" /><path d="M7 4l2 4H5z" fill="#7d1217" />
              <path d="M5 15l2-3 2 3" fill="none" stroke="#333" />
            </Svg>
            <Caret />
          </AppButton>
          <TitleBar>
            <QuickTools>
              <Tool name="new" /><Tool name="open" /><Tool name="save" /><Tool name="print" /><Tool name="undo" /><Caret $light />
              <Tool name="redo" /><Caret $light />
              <QuickGroup><Tool name="project" /><Tool name="sheet" /><Caret $light /></QuickGroup>
            </QuickTools>
            <Caret />
            <Search aria-label="Search" placeholder="Type a keyword or phrase" />
            <Account>
              <Tool name="binoc" /><Tool name="user" />Sign In
              <Spacer $grow={3} /><Caret /><Tool name="exchange" /><Tool name="cloud" /><Caret />
              <Spacer /><Tool name="help" /><Caret /><Spacer />
              <IconButton type="button" aria-label="Minimize"><Glyph name="min" w={8} h={7} /></IconButton>
              <IconButton type="button" aria-label="Maximize"><Glyph name="max" w={8} h={7} /></IconButton>
              <IconButton type="button" aria-label="Close"><Glyph name="close" w={8} h={7} /></IconButton>
            </Account>
          </TitleBar>
          <Tabs>
            {tabNames.map((t, i) => <Tab key={t} type="button" $on={i === 0}>{t}</Tab>)}
            <TabExtras><Tool name="tabmenu" /><Caret /></TabExtras>
          </Tabs>
        </Header>
        <RibbonPanels />
        <DocBar>
          <DocTab>
            <DocName type="button">object_display_material_based*</DocName>
            <IconButton type="button" aria-label="Close drawing"><Glyph name="close" w={7} h={6} /></IconButton>
          </DocTab>
          <AddTab type="button" aria-label="New drawing"><Glyph name="plus" w={9} h={8} /></AddTab>
        </DocBar>
        <Canvas>
          <FloorPlan />
          <ViewLabel>[−][Top][2D Wireframe]</ViewLabel>
          <ViewControls><Tool name="min" /><Tool name="restore" /><Tool name="close" /></ViewControls>
          <Palette $side="left">
            <Tool name="close" /><Tool name="pin" /><Tool name="props" />
            <PaletteName>TOOL PALETTES - DESIGN</PaletteName><Glyph name="props" />
          </Palette>
          <ViewCube />
          <Palette $side="right">
            <Tool name="close" /><Tool name="pin" /><Tool name="props" />
            <PaletteName>PROPERTIES</PaletteName><Glyph name="props" />
          </Palette>
          <CommandBar onSubmit={(e) => e.preventDefault()}>
            <CommandGrip><Tool name="close" /><Tool name="wrench" /></CommandGrip>
            <Glyph name="prompt" /><Caret />
            <CommandInput aria-label="Command" placeholder="Type a command" /><Caret $up />
          </CommandBar>
        </Canvas>
        <DetailBar>
          <DetailPick>
            <DropSelect aria-label="Display configuration"><option>Medium Detail</option></DropSelect><Caret />
          </DetailPick>
          <span>Cut Plane: 3'-6"</span>
          <DetailIcons>
            <Tool name="surf" /><Tool name="surf" /><Tool name="swap" /><Tool name="clip" /><Tool name="bulb" /><Caret />
          </DetailIcons>
        </DetailBar>
        <StatusBar>
          <StatusItems>
            <span>0.0, 0.0, 0.0&nbsp; MODEL</span>
            <Tool name="grid" />
            <StatusGroup><Tool name="dots" /><Caret /></StatusGroup>
            <Tool name="infer" /><Tool name="ortho" />
            <StatusGroup><Tool name="polar" /><Caret /></StatusGroup>
            <Tool name="angle" />
            <StatusGroup><Tool name="snap" /><Caret /></StatusGroup>
            <Tool name="lwt" /><Tool name="cycle" /><Tool name="ucs" /><Tool name="annoA" /><Tool name="annoA" /><Tool name="annoB" />
            <StatusGroup>1/8" = 1'-0"<Caret /></StatusGroup>
            <StatusGroup><Tool name="gear" /><Caret /></StatusGroup>
            <Tool name="cross" /><Tool name="isolate" /><span>+0"</span><Tool name="perf" /><Tool name="full" /><Tool name="menu" />
          </StatusItems>
          <Watermark>CADLearning</Watermark>
        </StatusBar>
      </Frame>
    </>
  );
}
